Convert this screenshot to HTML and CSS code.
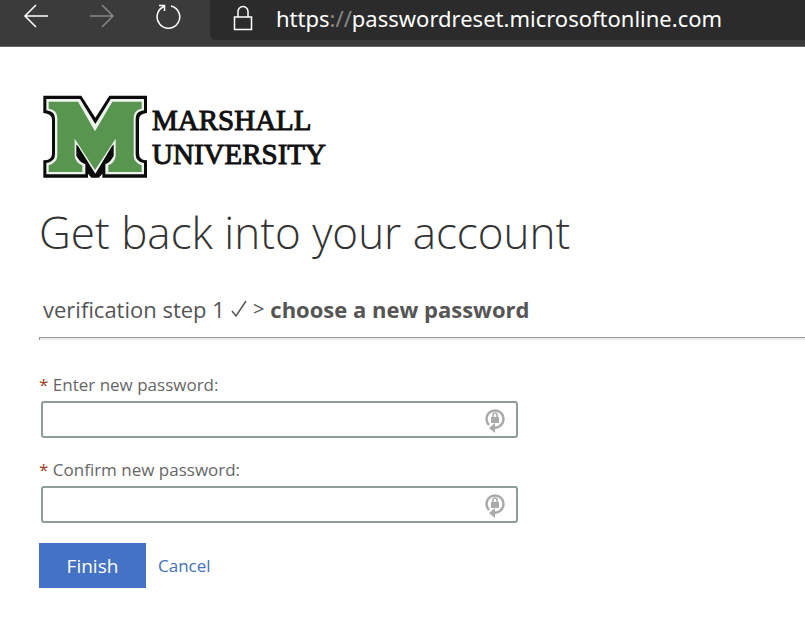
FILE: index.html
```html
<!DOCTYPE html>
<html lang="en">
<head>
<meta charset="utf-8">
<meta name="viewport" content="width=device-width, initial-scale=1">
<title>Get back into your account</title>
<link rel="stylesheet" href="styles.css">
</head>
<body>
<header class="toolbar">
  <nav class="nav" aria-label="Browser">
    <button class="nav-button" type="button" aria-label="Back">
      <svg width="26" height="26" viewBox="0 0 26 26"><path d="M25 12H2M13 1L2 12L13 23"/></svg>
    </button>
    <button class="nav-button" type="button" aria-label="Forward" disabled>
      <svg width="26" height="26" viewBox="0 0 26 26"><path d="M1 12H24M13 1L24 12L13 23"/></svg>
    </button>
    <button class="nav-button" type="button" aria-label="Refresh">
      <svg width="26" height="26" viewBox="0 0 26 26"><path d="M16 1.900A11.3 11.3 0 1 1 9.500 2.300M4 1.500H9.500V7"/></svg>
    </button>
  </nav>
  <div class="address">
    <svg class="lock" width="20" height="26" viewBox="0 0 20 26"><path d="M1.500 12H18.500V24.500H1.500ZM5 12V6.500A5 5 0 0 1 15 6.500V12"/></svg>
    <span>https<span class="dim">://</span>passwordreset.microsoftonline.com</span>
  </div>
</header>
<main class="page">
  <div class="brand">
    <svg class="brand-mark" width="105" height="84" viewBox="39 30 315 252" aria-hidden="true">
      <path d="M40 32H154L196 98L238 32H351V84Q327 86 327 104V206Q328 225 351 226V278H217V266L207 278H184L174 266V278H40V226Q66 225 66 206V104Q66 86 40 84Z" fill="#0b0b0b"/>
      <path d="M49 42H150L196 117L242 42H342V76Q317 79 317 101V208Q317 230 342 234V268H226V238Q245 230 248 213V180L196 266L142 180V213Q145 230 166 238V268H49V234Q75 230 75 208V101Q75 79 49 76Z" fill="#eef3ee"/>
      <path d="M139 178L172 231V237Q148 228 139 213ZM251 178L219 231V237Q243 228 251 213Z" fill="#0b0b0b"/>
      <path d="M56 50H144L195 139L247 50H335V71Q311 75 311 98V211Q311 233 335 241V261H235V241Q255 232 257 212V161L195 255L134 161V212Q136 232 157 241V261H56V241Q82 233 82 211V98Q82 75 56 71Z" fill="#58954f"/>
    </svg>
    <div class="brand-name"><span>MARSHALL</span><span>UNIVERSITY</span></div>
  </div>
  <h1 class="title">Get back into your account</h1>
  <p class="steps">verification step 1
    <svg class="check" width="16" height="18" viewBox="0 0 16 18" role="img" aria-label="done"><path d="M1 11L5 16L15 1"/></svg>
    <span class="arrow">&gt;</span> <strong>choose a new password</strong></p>
  <hr class="rule">
  <form class="form">
    <div class="field">
      <label for="new-password"><span class="star">*</span> Enter new password:</label>
      <div class="box">
        <input id="new-password" type="password">
        <svg class="manager" width="22" height="26" viewBox="0 0 22 26"><path class="ring" d="M5 18A8.500 8.500 0 1 1 17 18Q15 20.500 10 21"/><path class="solid" d="M5 21L11 16V26ZM7 10H15V16H7Z"/><path class="shackle" d="M9 10V8A2 2 0 0 1 13 8V10"/></svg>
      </div>
    </div>
    <div class="field">
      <label for="confirm-password"><span class="star">*</span> Confirm new password:</label>
      <div class="box">
        <input id="confirm-password" type="password">
        <svg class="manager" width="22" height="26" viewBox="0 0 22 26"><path class="ring" d="M5 18A8.500 8.500 0 1 1 17 18Q15 20.500 10 21"/><path class="solid" d="M5 21L11 16V26ZM7 10H15V16H7Z"/><path class="shackle" d="M9 10V8A2 2 0 0 1 13 8V10"/></svg>
      </div>
    </div>
    <div class="actions">
      <button class="finish" type="button">Finish</button>
      <a class="cancel" href="#">Cancel</a>
    </div>
  </form>
</main>
</body>
</html>
```
FILE: styles.css
```css
* {
  box-sizing: border-box;
}

body {
  margin: 0;
  background: #fff;
  color: #555;
  font-family: "Open Sans", "Noto Sans", sans-serif;
}

svg {
  display: block;
  flex: none;
  fill: none;
}

.toolbar {
  display: flex;
  height: 47px;
  padding-bottom: 6px;
  background: #3b3b3b;
  border-bottom: 1px solid #666;
}

.nav {
  display: flex;
  flex: none;
  gap: 40px;
  width: 210px;
  padding: 4px 0 0 23px;
}

.nav-button {
  width: 26px;
  height: 26px;
  padding: 0;
  border: 0;
  background: none;
  color: #fff;
}

.nav-button:disabled {
  color: #888;
}

.nav-button svg,
.lock {
  stroke: currentColor;
  stroke-width: 1.5;
}

.address {
  display: flex;
  flex: 1;
  align-items: center;
  gap: 23px;
  padding: 0 23px 4px;
  border-bottom-left-radius: 6px;
  background: #2b2b2b;
  color: #fff;
  font-family: "Noto Sans", sans-serif;
  font-size: 22px;
  line-height: 32px;
  white-space: nowrap;
}

.dim {
  color: #888;
}

.page {
  padding: 48px 0 0 39px;
}

.brand {
  display: flex;
  align-items: center;
  gap: 4px;
  padding-left: 4px;
}

.brand-name {
  display: flex;
  flex-direction: column;
  color: #111;
  font: 400 29px/34px "Liberation Serif", serif;
  -webkit-text-stroke: 1px #111;
}

.title {
  margin: 19px 0 0;
  color: #333;
  font: 300 44px/68px "Open Sans", sans-serif;
}

.steps {
  display: flex;
  align-items: center;
  gap: 6px;
  margin: 27px 0 0;
  padding-left: 4px;
  font-size: 22px;
  line-height: 32px;
  white-space: nowrap;
}

.check {
  stroke: #555;
  stroke-width: 1.5;
}

.arrow {
  font-size: 20px;
}

.rule {
  height: 3px;
  margin: 12px 0 33px;
  border: 0;
  border-top: 1px solid #999;
  border-left: 1px solid #999;
  background: #eee;
}

.field {
  width: 479px;
  max-width: 100%;
  margin-bottom: 20px;
}

.field label {
  display: block;
  font-size: 17px;
  line-height: 24px;
  color: #666;
}

.star {
  color: #a33a1c;
}

.box {
  display: flex;
  align-items: center;
  height: 37px;
  margin: 4px 0 0 2px;
  padding: 0 10px;
  border: 2px solid #8e9c9b;
  border-radius: 3px;
}

.box input {
  flex: 1;
  min-width: 0;
  border: 0;
  outline: 0;
  background: none;
  font: inherit;
}

.ring {
  stroke: #aaa;
  stroke-width: 2.500;
}

.solid {
  fill: #aaa;
}

.shackle {
  stroke: #aaa;
  stroke-width: 1.5;
}

.actions {
  display: flex;
  align-items: center;
  gap: 12px;
}

.finish {
  width: 107px;
  height: 45px;
  padding: 0;
  border: 0;
  background: #4472c4;
  color: #fff;
  font: 19px/24px "Open Sans", sans-serif;
}

.cancel {
  color: #4472b4;
  font-size: 17px;
  line-height: 24px;
  text-decoration: none;
}
```
